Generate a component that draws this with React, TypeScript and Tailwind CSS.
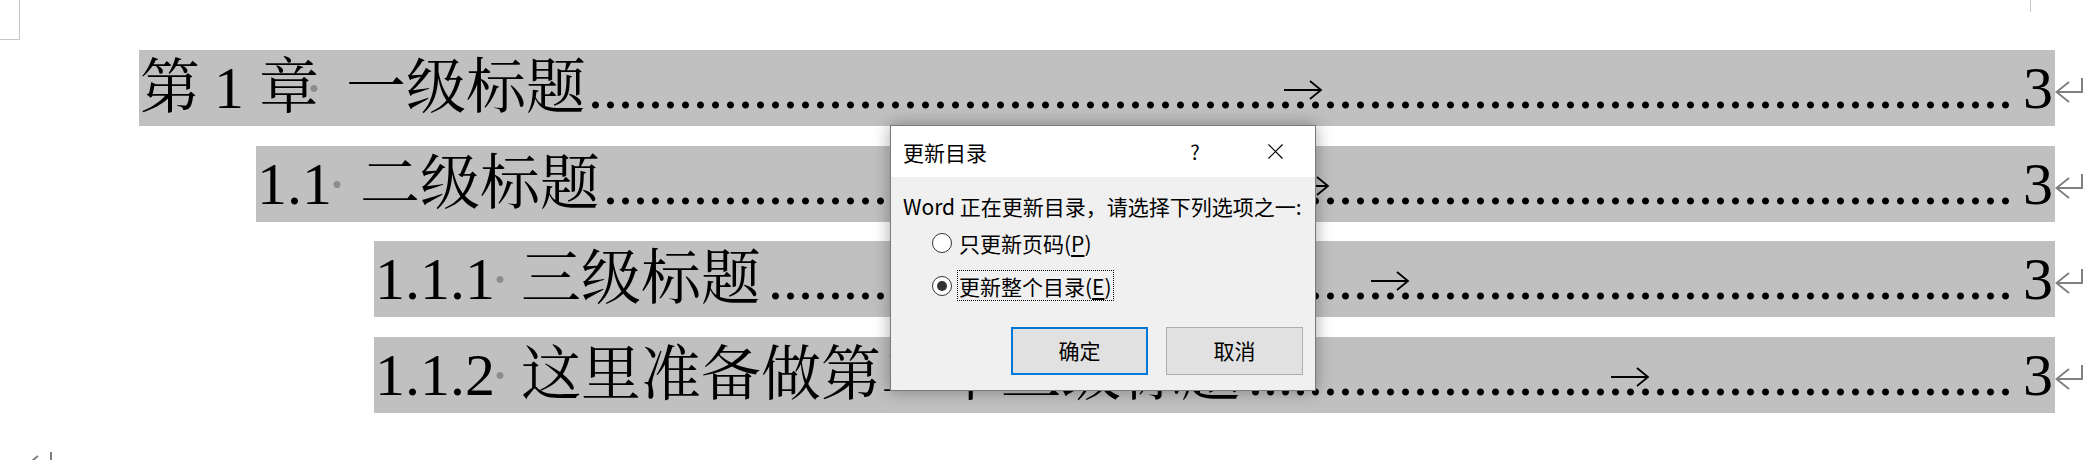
import type { ReactNode } from 'react';

const serif = "font-['Liberation_Serif','Noto_Serif_CJK_SC','Noto_Sans_CJK_SC',serif]";

const entries: { key: string; pad: string; dot: string; gap: string; num: ReactNode; title: string }[] = [
  {
    key: 'ch1',
    pad: 'pl-[139px]',
    dot: '-ml-[15px]',
    gap: 'ml-[27px]',
    num: (
      <>
        <span>第</span>
        <span className="ml-[14px]">1</span>
        <span className="ml-[15px]">章</span>
      </>
    ),
    title: '一级标题',
  },
  { key: '1.1', pad: 'pl-[256px]', dot: '-ml-[5px]', gap: 'ml-[18px]', num: '1.1', title: '二级标题' },
  { key: '1.1.1', pad: 'pl-[374px]', dot: '-ml-[5px]', gap: 'ml-[16px]', num: '1.1.1', title: '三级标题' },
  { key: '1.1.2', pad: 'pl-[374px]', dot: '-ml-[5px]', gap: 'ml-[16px]', num: '1.1.2', title: '这里准备做第二个三级标题' },
];

const dots = '.'.repeat(160);

function ReturnMark() {
  return (
    <svg width="33" height="76" viewBox="0 0 33 76" className="shrink-0">
      <path d="M27 28 V42 H2" fill="none" stroke="#808080" strokeWidth="2" />
      <path d="M14 32 L1.5 42 L14 52" fill="none" stroke="#808080" strokeWidth="2" />
    </svg>
  );
}

function TabArrow() {
  return (
    <svg
      width="40"
      height="22"
      viewBox="0 0 40 22"
      className="absolute left-1/2 top-[29px] -translate-x-1/2"
    >
      <path d="M1 11 H38" stroke="#000" strokeWidth="1.8" />
      <path d="M27 2 L38 11 L27 20" fill="none" stroke="#000" strokeWidth="1.8" />
    </svg>
  );
}

function TocRow({
  pad,
  dot,
  gap,
  num,
  title,
}: {
  pad: string;
  dot: string;
  gap: string;
  num: ReactNode;
  title: string;
}) {
  return (
    <div className={`flex ${pad}`}>
      <div className="flex h-[76px] flex-1 items-start overflow-hidden whitespace-nowrap bg-[#c0c0c0] pl-[1px] pr-[2px] text-[60px] leading-[76px] text-black">
        <span className="flex shrink-0">
          {num}
          {/* space mark */}
          <span className={`relative inline-block w-[15px] text-center font-['Liberation_Serif'] text-[#8c8c8c] ${dot}`}>·</span>
          <span className={gap}>{title}</span>
        </span>
        {/* leader dots, tab mark sits in the middle */}
        <span className="relative ml-[6px] flex min-w-0 flex-1 justify-end overflow-hidden">
          <span className="shrink-0">{dots}</span>
          <TabArrow />
        </span>
        <span className="ml-[10px] shrink-0">3</span>
      </div>
      <ReturnMark />
    </div>
  );
}

function Radio({ checked }: { checked?: boolean }) {
  return (
    <span className="flex h-[20px] w-[20px] shrink-0 items-center justify-center rounded-full border border-[#333] bg-white">
      {checked && <span className="h-[10px] w-[10px] rounded-full bg-[#333]" />}
    </span>
  );
}

function UpdateDialog() {
  return (
    <div className="absolute left-[890px] top-[125px] flex h-[266px] w-[426px] flex-col border border-[#7a7a7a] bg-[#f0f0f0] font-['Noto_Sans_CJK_SC',sans-serif] text-[21px] text-black shadow-[0_0_16px_rgba(0,0,0,0.35)]">
      {/* title bar */}
      <div className="flex h-[51px] items-center bg-white">
        <span className="flex-1 pl-[12px] leading-[28px]">更新目录</span>
        <span className="flex w-[80px] justify-center text-[20px] leading-[28px]">?</span>
        <span className="flex w-[80px] justify-center">
          <svg width="15" height="15" viewBox="0 0 15 15">
            <path d="M0.5 0.5 L14.5 14.5 M14.5 0.5 L0.5 14.5" stroke="#000" strokeWidth="1.2" />
          </svg>
        </span>
      </div>

      <div className="flex flex-1 flex-col px-[12px] pt-[15px]">
        <p className="leading-[28px]">Word 正在更新目录，请选择下列选项之一:</p>

        <div className="mt-[7px] flex flex-col gap-[12px] pl-[29px]">
          <label className="flex h-[31px] items-center">
            <Radio />
            <span className="ml-[5px] flex h-[31px] items-center border border-transparent px-[1px] leading-[28px]">
              只更新页码(<span className="underline underline-offset-[3px]">P</span>)
            </span>
          </label>
          <label className="flex h-[31px] items-center">
            <Radio checked />
            <span className="ml-[5px] flex h-[31px] items-center border border-dotted border-black px-[1px] leading-[28px]">
              更新整个目录(<span className="underline underline-offset-[3px]">E</span>)
            </span>
          </label>
        </div>

        <div className="mt-[26px] flex justify-end gap-[18px]">
          <button className="flex h-[48px] w-[137px] items-center justify-center border-2 border-[#0078d7] bg-[#e1e1e1] text-[21px]">
            确定
          </button>
          <button className="flex h-[48px] w-[137px] items-center justify-center border border-[#adadad] bg-[#e1e1e1] text-[21px]">
            取消
          </button>
        </div>
      </div>
    </div>
  );
}

export default function App() {
  return (
    <div className={`relative h-[460px] w-[2088px] overflow-hidden bg-white ${serif}`}>
      {/* page corner marks */}
      <div className="flex h-[40px] items-start justify-between">
        <div className="h-[40px] w-[20px] border-b border-r border-[#c6c6c6]" />
        <div className="mr-[57px] h-[12px] w-0 border-l border-[#c6c6c6]" />
      </div>

      <div className="mt-[10px] flex flex-col gap-[19.67px]">
        {entries.map(({ key, ...e }) => (
          <TocRow key={key} {...e} />
        ))}
      </div>

      <div className="mt-[11px] pl-[24px]">
        <ReturnMark />
      </div>

      <UpdateDialog />
    </div>
  );
}
